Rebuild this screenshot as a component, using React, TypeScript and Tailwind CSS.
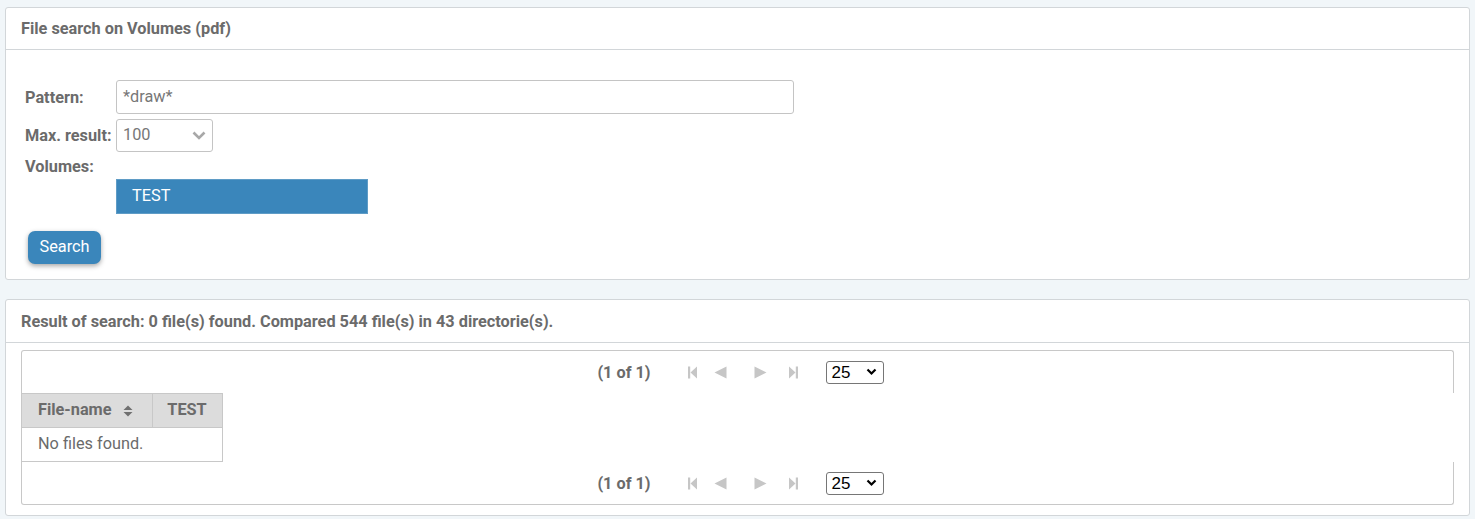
import React from "react"

const labelCls = "text-[16.3px] leading-[19px] font-bold text-[#6b6b6b]"

const PagerIcon = ({ kind }: { kind: "first" | "prev" | "next" | "last" }) => {
    // disabled paginator glyphs
    return (
        <svg width={kind === "first" || kind === "last" ? 11 : 13} height="13" viewBox={kind === "first" || kind === "last" ? "0 0 11 13" : "0 0 13 13"} className="fill-[#c6c6c6]">
            {kind === "first" && (
                <>
                    <rect x="0" y="0.5" width="2.2" height="12" />
                    <polygon points="9,0.5 2.5,6.5 9,12.5" />
                </>
            )}
            {kind === "prev" && <polygon points="12.5,0.5 0.5,6.5 12.5,12.5" />}
            {kind === "next" && <polygon points="0.5,0.5 12.5,6.5 0.5,12.5" />}
            {kind === "last" && (
                <>
                    <polygon points="2,0.5 8.5,6.5 2,12.5" />
                    <rect x="8.8" y="0.5" width="2.2" height="12" />
                </>
            )}
        </svg>
    )
}

const Paginator = ({ position }: { position: "top" | "bottom" }) => {
    return (
        <div
            className={`flex items-center justify-center h-[43px] pl-[6px] border-[#c8c8c8] border-l border-r ${
                position === "top" ? "border-t rounded-t-[3px]" : "border-b rounded-b-[3px]"
            }`}
        >
            <span className={labelCls}>(1 of 1)</span>
            <div className="flex items-center ml-[37px]">
                <PagerIcon kind="first" />
                <span className="ml-[15px]"><PagerIcon kind="prev" /></span>
                <span className="ml-[27px]"><PagerIcon kind="next" /></span>
                <span className="ml-[20px]"><PagerIcon kind="last" /></span>
            </div>
            <div className="ml-[28px] flex items-center justify-between w-[58px] h-[23px] border border-[#767676] rounded-[3px] pl-[5px] pr-[6px] bg-white">
                <span className="text-[17px] text-black font-['Liberation_Sans',Arial,sans-serif] leading-none">25</span>
                <svg width="11" height="8" viewBox="0 0 11 8">
                    <path d="M1.5 1.5 L5.5 5.5 L9.5 1.5" stroke="#000" strokeWidth="2.2" fill="none" />
                </svg>
            </div>
        </div>
    )
}

export default function App() {
    return (
        <div className="w-full min-h-[519px] bg-[#f1f6f9] px-[5px] pt-[7px] pb-[4px] font-['Roboto',sans-serif]">
            {/* search panel */}
            <div className="bg-white border border-[#d2d6d9] rounded-[3px]">
                <div className="h-[42px] px-[15px] flex items-center border-b border-[#d2d6d9]">
                    <h1 className={labelCls}>File search on Volumes (pdf)</h1>
                </div>
                <div className="pt-[30px] pb-[15px] px-[19px]">
                    <div className="grid grid-cols-[91px_1fr] gap-y-[5px] items-center">
                        <label className={labelCls}>Pattern:</label>
                        <div className="w-[678px] h-[34px] border border-[#c4c4c4] rounded-[3px] flex items-center px-[6px] text-[16.3px] text-[#777]">
                            *draw*
                        </div>

                        <label className={labelCls}>Max. result:</label>
                        <div className="w-[97px] h-[33px] border border-[#c4c4c4] rounded-[3px] flex items-center justify-between pl-[6px] pr-[6px] text-[16.3px] text-[#777]">
                            <span>100</span>
                            <svg width="14" height="9" viewBox="0 0 14 9">
                                <path d="M1.5 1.5 L7 7 L12.5 1.5" stroke="#a8a8a8" strokeWidth="2.6" fill="none" />
                            </svg>
                        </div>

                        <label className={`${labelCls} h-[17px] leading-[17px]`}>Volumes:</label>
                        <div />

                        <div />
                        <div className="w-[252px] h-[35px] bg-[#3a86bb] border border-[#5f9cc6] flex items-center pl-[15px] text-[16.3px] text-white">
                            TEST
                        </div>
                    </div>
                    <button className="mt-[17px] ml-[3px] w-[73px] h-[33px] rounded-[7px] bg-[#3a86bb] text-white text-[16.3px] shadow-[0_2px_5px_rgba(0,0,0,0.35)]">
                        Search
                    </button>
                </div>
            </div>

            {/* result panel */}
            <div className="mt-[19px] bg-white border border-[#d2d6d9] rounded-[3px]">
                <div className="h-[43px] px-[15px] flex items-center border-b border-[#d2d6d9]">
                    <h2 className={labelCls}>Result of search: 0 file(s) found. Compared 544 file(s) in 43 directorie(s).</h2>
                </div>
                <div className="pt-[7px] pb-[10px] px-[15px]">
                    <Paginator position="top" />
                    <div className="border-l border-[#c8c8c8]">
                        <table className="border-collapse text-[16.3px]">
                            <thead>
                                <tr className="bg-[#dcdcdc] h-[34px]">
                                    <th className="w-[130px] border border-l-0 border-[#c8c8c8] text-left pl-[16px] font-bold text-[#6b6b6b]">
                                        <span className="inline-flex items-center gap-[11px]">
                                            File-name
                                            <svg width="10" height="12" viewBox="0 0 10 12" className="fill-[#707070]">
                                                <polygon points="5,0.5 9.5,5 0.5,5" />
                                                <polygon points="0.5,7 9.5,7 5,11.5" />
                                            </svg>
                                        </span>
                                    </th>
                                    <th className="w-[70px] border border-[#c8c8c8] text-center font-bold text-[#6b6b6b]">TEST</th>
                                </tr>
                            </thead>
                            <tbody>
                                <tr className="h-[34px]">
                                    <td colSpan={2} className="border border-l-0 border-[#c8c8c8] pl-[16px] text-[#6b6b6b]">
                                        No files found.
                                    </td>
                                </tr>
                            </tbody>
                        </table>
                    </div>
                    <Paginator position="bottom" />
                </div>
            </div>
        </div>
    )
}
